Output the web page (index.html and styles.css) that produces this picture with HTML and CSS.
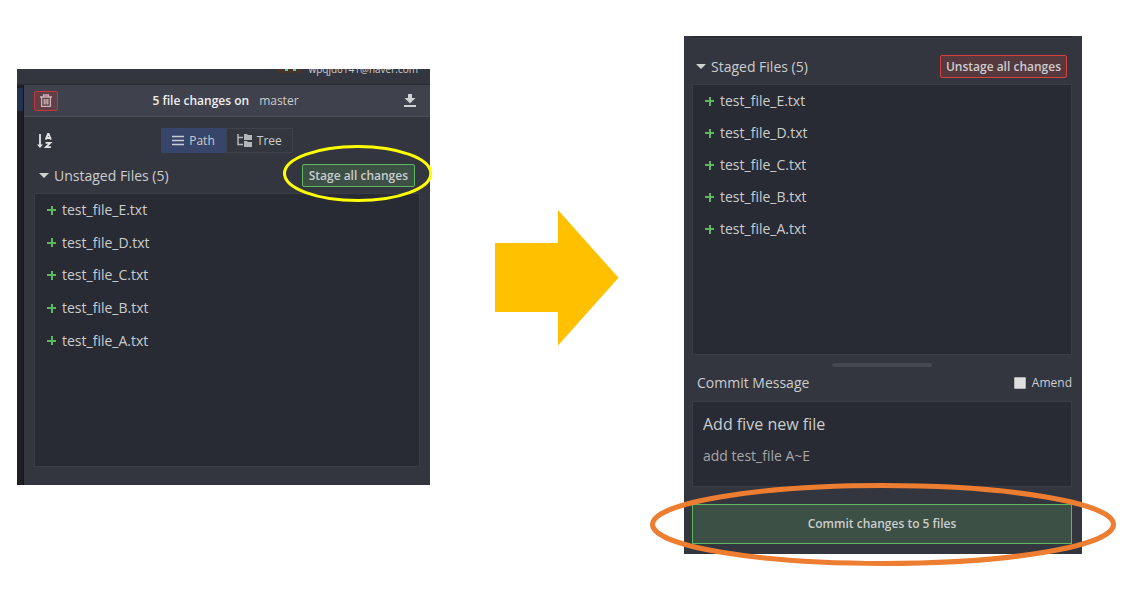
FILE: index.html
```html
<!DOCTYPE html>
<html lang="en">
<head>
<meta charset="utf-8">
<title>Stage and commit</title>
<link rel="stylesheet" href="styles.css">
</head>
<body>
<main class="steps">
  <section class="panel unstaged">
    <div class="account">
      <svg class="avatar" width="24" height="12" viewBox="0 0 24 12"><path fill="#4a3524" d="M0 0h24v12H0z"/><path fill="#59c9b5" d="M7 8h3v2H7zM15 8h3v2h-3z"/></svg>
      <span>wpqjd6141@naver.com</span>
    </div>
    <div class="workspace">
      <div class="graph-edge"><div class="graph-row"></div></div>
      <div class="changes">
        <header class="changes-head">
          <button class="discard" aria-label="Discard all changes">
            <svg width="12" height="14" viewBox="0 0 12 14" fill="none" stroke="#c9b3b6" stroke-width="1.3"><path d="M0 3h12M3.500 3V1h5v2M1.600 3v9.300h8.800V3M4.200 5v5.500M6 5v5.500M7.800 5v5.500"/></svg>
          </button>
          <p class="summary"><strong>5 file changes on</strong><span>master</span></p>
          <button class="plain" aria-label="Download">
            <svg width="12" height="13" viewBox="0 0 12 13" fill="#d0d1d4"><path d="M4 0h4v4h3.500L6 9.500.5 4H4zM0 11h12v2H0z"/></svg>
          </button>
        </header>
        <div class="toolbar">
          <button class="plain" aria-label="Sort by name">
            <svg width="16" height="16" viewBox="0 0 16 16" fill="none" stroke="#e4e4e6" stroke-width="1.800"><path d="M3 1v12"/><path d="M0 11.500h6L3 15z" fill="#e4e4e6" stroke="none"/><path d="M8.700 6.700 11 1h.6l2.300 5.700M9.500 5h3.700M8.600 9.900h4.700L9 14.100h4.900"/></svg>
          </button>
          <div class="view-switch">
            <button class="view active"><svg width="12" height="11" viewBox="0 0 12 11" stroke="#c8ccd8" stroke-width="1.500"><path d="M0 1.500h12M0 5.500h12M0 9.500h12"/></svg>Path</button>
            <button class="view"><svg width="15" height="13" viewBox="0 0 15 13"><path d="M1 0v10.500h5M1 3.500h5" fill="none" stroke="#b5b6ba" stroke-width="1.500"/><path fill="#b5b6ba" d="M7 0h3l1 1h4v5H7zM7 7h3l1 1h4v5H7z"/></svg>Tree</button>
          </div>
        </div>
        <div class="section-head">
          <h2><svg width="10" height="5" viewBox="0 0 10 5" fill="#d0d1d4"><path d="M0 0h10L5 5z"/></svg>Unstaged Files (5)</h2>
          <div class="highlighted">
            <button class="tag green">Stage all changes</button>
            <svg class="ring ring-yellow" viewBox="0 0 148 56" preserveAspectRatio="none"><ellipse cx="74" cy="28" rx="72.500" ry="26.500" fill="none" stroke="#ffff00" stroke-width="3"/></svg>
          </div>
        </div>
        <div class="file-box file-box-unstaged">
          <ul class="files files-unstaged">
            <li>test_file_E.txt</li><li>test_file_D.txt</li><li>test_file_C.txt</li><li>test_file_B.txt</li><li>test_file_A.txt</li>
          </ul>
        </div>
      </div>
    </div>
  </section>

  <svg class="arrow" width="124" height="136" viewBox="0 0 124 136"><path fill="#ffc000" d="M0 33h63V0l60.500 67.800L63 135.500V102H0z"/></svg>

  <section class="panel staged">
    <div class="previous-list"></div>
    <div class="section-head">
      <h2><svg width="10" height="5" viewBox="0 0 10 5" fill="#d0d1d4"><path d="M0 0h10L5 5z"/></svg>Staged Files (5)</h2>
      <button class="tag red">Unstage all changes</button>
    </div>
    <div class="file-box file-box-staged">
      <ul class="files files-staged">
        <li>test_file_E.txt</li><li>test_file_D.txt</li><li>test_file_C.txt</li><li>test_file_B.txt</li><li>test_file_A.txt</li>
      </ul>
    </div>
    <div class="grip"></div>
    <div class="commit-head">
      <h2>Commit Message</h2>
      <label class="amend"><input type="checkbox">Amend</label>
    </div>
    <div class="message">
      <input class="message-title" type="text" value="Add five new file" aria-label="Summary">
      <textarea class="message-body" aria-label="Description">add test_file A~E</textarea>
    </div>
    <div class="highlighted">
      <button class="commit green">Commit changes to 5 files</button>
      <svg class="ring ring-orange" viewBox="0 0 466 82" preserveAspectRatio="none"><ellipse cx="233" cy="41" rx="230.500" ry="38.500" fill="none" stroke="#ed7d31" stroke-width="5"/></svg>
    </div>
  </section>
</main>
</body>
</html>
```
FILE: styles.css
```css
* { box-sizing: border-box; }

body {
  margin: 0;
  background: #fff;
  color: #cbccce;
  font: 14px/20px "Open Sans", "Noto Sans", sans-serif;
}

h2, p, ul { margin: 0; padding: 0; }
h2 { font-size: 14px; font-weight: 400; }
button, input, textarea { font: inherit; color: inherit; }
button { padding: 0; }
svg { display: block; flex: none; }

.steps {
  display: grid;
  grid-template-columns: 413fr 254px 398fr;
  align-items: start;
  padding: 36px 41px 36px 17px;
}

.panel { background: #33363f; min-width: 0; }
.unstaged { margin-top: 33px; }
.arrow { margin: 174px 0 0 65px; }

/* Account strip, scrolled mostly out of view */
.account {
  display: flex;
  justify-content: flex-end;
  align-items: flex-end;
  gap: 6px;
  height: 16px;
  padding: 0 12px 9px 0;
  border-bottom: 1px solid #292c33;
  overflow: hidden;
  font-size: 10px;
  line-height: 12px;
}
.avatar { margin-bottom: 2px; }

.workspace { display: flex; }

.graph-edge {
  flex: none;
  width: 7px;
  padding-top: 3px;
  background: #1d1f24;
  border-right: 1px solid #15161a;
}
.graph-row { height: 23px; background: #243252; }

.changes { flex: 1; min-width: 0; padding-bottom: 18px; }

.changes-head {
  display: flex;
  align-items: center;
  justify-content: space-between;
  height: 32px;
  padding: 0 14px 0 10px;
  background: #3f424d;
  border-bottom: 1px solid #4a4d58;
}
.summary { display: flex; gap: 10px; padding: 1px 11px 0 0; font-size: 12px; }
.summary strong { color: #eeeeef; font-weight: 600; }

.discard {
  display: flex;
  align-items: center;
  justify-content: center;
  width: 24px;
  height: 20px;
  background: #633e47;
  border: 1px solid #c0383a;
  border-radius: 2px;
}
.plain { background: none; border: 0; }

.toolbar {
  display: grid;
  grid-template-columns: 1fr auto 1fr;
  align-items: center;
  padding: 11px 13px 0;
}
.view-switch { display: flex; }
.view {
  display: flex;
  align-items: center;
  gap: 5px;
  height: 25px;
  padding: 0 10px;
  background: none;
  border: 1px solid #3f424b;
  font-size: 12px;
}
.view.active { background: #37456a; border-color: #37456a; }

.section-head {
  display: flex;
  align-items: center;
  justify-content: space-between;
}
.section-head h2 { display: flex; align-items: center; gap: 5px; }
.unstaged .section-head { padding: 11px 15px 6px; }
.staged .section-head { padding: 16px 5px 6px 4px; }

.tag {
  display: block;
  height: 23px;
  padding: 0 5px;
  border-radius: 2px;
  font-size: 12px;
  font-weight: 600;
  line-height: 20px;
}
.green { background: #3c5045; border: 1px solid #5cb85c; }
.green.tag { padding: 0 6px; }
.red { background: #56393f; border: 1px solid #d9403d; }

.highlighted { position: relative; }
.ring { position: absolute; pointer-events: none; }
.ring-yellow { top: -19px; left: -19px; width: calc(100% + 36px); height: 57px; }
.ring-orange { top: -21px; left: -42px; width: calc(100% + 86px); height: 83px; }

.file-box { background: #282b33; border: 1px solid #3a3d46; }
.file-box-unstaged { min-height: 274px; margin: 0 10px; padding-left: 12px; }
.file-box-staged { min-height: 271px; padding-left: 12px; }

.files {
  display: grid;
  grid-template-rows: repeat(5, 1fr);
  list-style: none;
}
.files-unstaged { height: 163px; }
.files-staged { height: 160px; }
.files li { display: flex; align-items: center; gap: 6px; }
.files li::before {
  content: "";
  width: 9px;
  height: 9px;
  background:
    linear-gradient(#5cb85c, #5cb85c) center / 9px 2px no-repeat,
    linear-gradient(#5cb85c, #5cb85c) center / 2px 9px no-repeat;
}

.staged { padding: 0 10px 10px 8px; }
.previous-list {
  height: 3px;
  background: #282b33;
  border-bottom: 1px solid #3a3d46;
}

.grip {
  width: 100px;
  height: 4px;
  margin: 8px auto 0;
  border-radius: 2px;
  background: #454851;
}

.commit-head {
  display: flex;
  justify-content: space-between;
  padding: 6px 0 8px 5px;
}
.amend { display: flex; align-items: center; gap: 6px; font-size: 12px; }
.amend input {
  appearance: none;
  width: 12px;
  height: 12px;
  margin: 0;
  background: #dedede;
  border: 1px solid #b4b4b4;
  border-radius: 1px;
}

.message {
  height: 86px;
  padding: 10px;
  background: #282b33;
  border: 1px solid #3a3d46;
}
.message-title, .message-body {
  display: block;
  width: 100%;
  padding: 0;
  background: none;
  border: 0;
  outline: 0;
}
.message-title { height: 24px; font-size: 16px; }
.message-body { height: 30px; margin-top: 10px; color: #a5a6aa; resize: none; }

.commit {
  display: block;
  width: 100%;
  height: 40px;
  margin-top: 17px;
  font-size: 12px;
  font-weight: 600;
}
```
